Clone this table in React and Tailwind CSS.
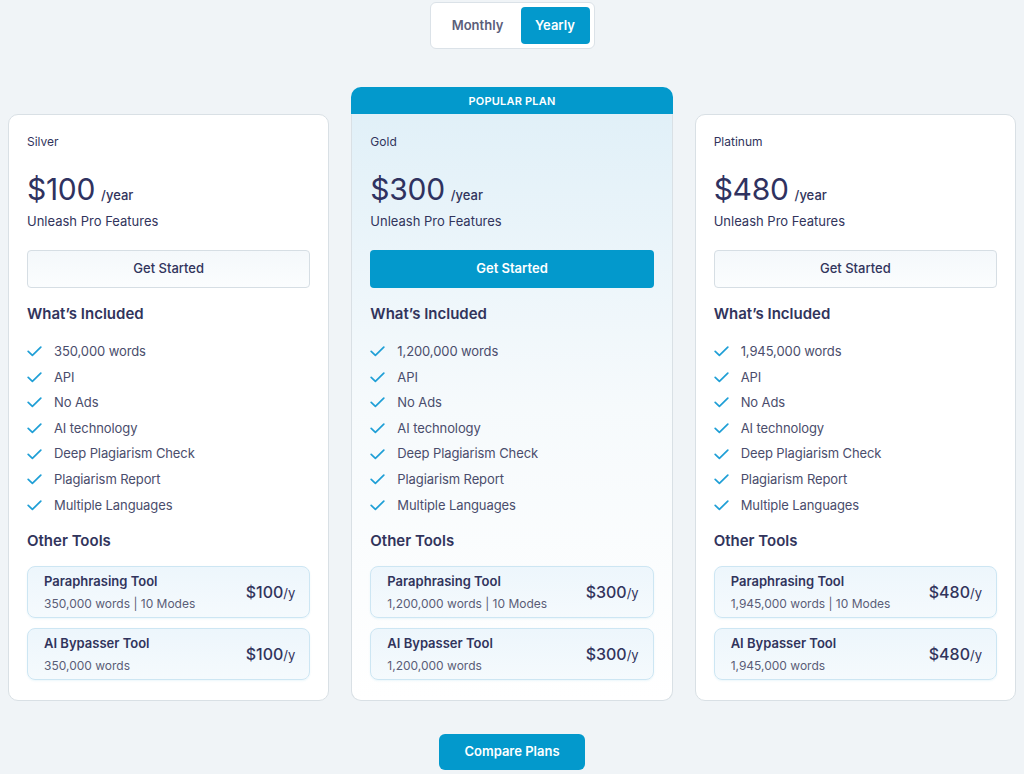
import React from "react";

const features = [
  "API",
  "No Ads",
  "AI technology",
  "Deep Plagiarism Check",
  "Plagiarism Report",
  "Multiple Languages",
];

const plans = [
  { name: "Silver", price: "$100", words: "350,000", popular: false },
  { name: "Gold", price: "$300", words: "1,200,000", popular: true },
  { name: "Platinum", price: "$480", words: "1,945,000", popular: false },
];

function Check() {
  return (
    <svg width="15" height="11" viewBox="0 0 15 11" fill="none" className="shrink-0">
      <path d="M1.2 5.4 L5.4 9.4 L13.8 1.2" stroke="#1f9fd6" strokeWidth="1.7" strokeLinecap="round" strokeLinejoin="round" />
    </svg>
  );
}

function ToolCard({ title, sub, price }) {
  return (
    <div className="h-[52px] rounded-[8px] border border-[#cde6f3] bg-gradient-to-b from-[#edf6fc] to-[#f5fafd] shadow-[0_1px_2px_rgba(2,153,204,0.08)] pl-[16px] pr-[14px] flex items-center justify-between">
      <div className="flex flex-col pt-[1px]">
        <div className="text-[13px] leading-[17px] font-semibold text-[#31345c]">{title}</div>
        <div className="text-[12px] leading-[16px] mt-[6px] text-[#5a5d77]">{sub}</div>
      </div>
      <div className="text-[16px] font-medium text-[#31345c] flex items-baseline">
        {price}
        <span className="text-[13px] font-normal">/y</span>
      </div>
    </div>
  );
}

function PlanBody({ plan }) {
  return (
    <div className="pt-[19px] px-[18px] pb-[20px]">
      <div className="text-[12px] leading-[16px] text-[#31345c]">{plan.name}</div>
      <div className="mt-[21px] h-[36px] flex items-end">
        <span className="text-[30px] leading-[36px] font-normal text-[#2f3260] tracking-[-0.3px]">{plan.price}</span>
        <span className="ml-[6px] mb-[4px] text-[13px] leading-[16px] font-medium text-[#31345c]">/year</span>
      </div>
      <div className="mt-[5px] text-[13px] leading-[18px] text-[#31345c]">Unleash Pro Features</div>
      {plan.popular ? (
        <button className="mt-[20px] w-full h-[38px] rounded-[4px] bg-[#0399cc] text-white text-[13px] font-semibold">
          Get Started
        </button>
      ) : (
        <button className="mt-[20px] w-full h-[38px] rounded-[4px] border border-[#d6dee4] bg-gradient-to-b from-[#f4f8fb] to-[#fbfdfe] text-[#31345c] text-[13px] font-medium">
          Get Started
        </button>
      )}
      <div className="mt-[16px] text-[15px] leading-[20px] font-semibold text-[#31345c]">What’s Included</div>
      <ul className="mt-[15px]">
        {[`${plan.words} words`, ...features].map((f) => (
          <li key={f} className="h-[25.6px] flex items-center gap-[12px]">
            <Check />
            <span className="text-[13px] tracking-[-0.1px] text-[#4a4d6c]">{f}</span>
          </li>
        ))}
      </ul>
      <div className="mt-[13px] text-[15px] leading-[20px] font-semibold text-[#31345c]">Other Tools</div>
      <div className="mt-[15px] flex flex-col gap-[10px]">
        <ToolCard title="Paraphrasing Tool" sub={`${plan.words} words | 10 Modes`} price={plan.price} />
        <ToolCard title="AI Bypasser Tool" sub={`${plan.words} words`} price={plan.price} />
      </div>
    </div>
  );
}

export default function App() {
  return (
    <div
      className="w-[1024px] h-[774px] bg-[#f0f4f7] flex flex-col items-center overflow-hidden"
      style={{ fontFamily: "Inter, 'Noto Sans', sans-serif" }}
    >
      <div className="mt-[2px] w-[165px] h-[47px] rounded-[6px] border border-[#dbe2e8] bg-white p-[4px] flex items-center">
        <button className="flex-1 h-[37px] text-[13px] font-semibold text-[#5b5e7a]">Monthly</button>
        <button className="w-[69px] h-[37px] rounded-[4px] bg-[#0399cc] text-white text-[13px] font-semibold">Yearly</button>
      </div>

      <div className="mt-[38px] w-full px-[8px] grid grid-cols-3 gap-[22px] items-end">
        {plans.map((plan) =>
          plan.popular ? (
            <div key={plan.name} className="flex flex-col">
              <div className="h-[27px] pt-[1px] rounded-t-[10px] bg-[#0399cc] flex items-center justify-center text-white text-[11px] font-semibold tracking-[0.2px]">
                POPULAR PLAN
              </div>
              <div className="rounded-b-[10px] border border-[#d9e0e5] border-t-[#e1f0f8] bg-gradient-to-b from-[#e1f0f8] via-[#f6fafc] to-white">
                <PlanBody plan={plan} />
              </div>
            </div>
          ) : (
            <div key={plan.name} className="rounded-[10px] border border-[#d9e0e5] bg-white">
              <PlanBody plan={plan} />
            </div>
          )
        )}
      </div>

      <button className="mt-[33px] w-[146px] h-[36px] rounded-[6px] bg-[#0399cc] text-white text-[13px] font-semibold">
        Compare Plans
      </button>
    </div>
  );
}
